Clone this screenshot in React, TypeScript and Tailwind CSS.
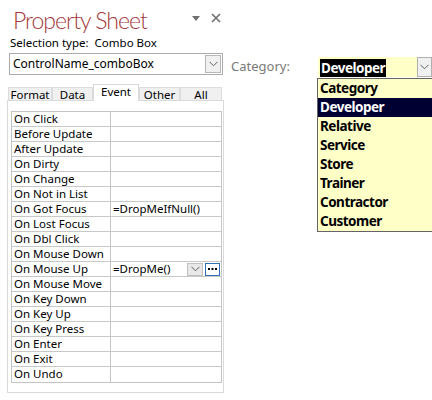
import React from "react";

const rows: [string, string][] = [
  ["On Click", ""],
  ["Before Update", ""],
  ["After Update", ""],
  ["On Dirty", ""],
  ["On Change", ""],
  ["On Not in List", ""],
  ["On Got Focus", "=DropMeIfNull()"],
  ["On Lost Focus", ""],
  ["On Dbl Click", ""],
  ["On Mouse Down", ""],
  ["On Mouse Up", "=DropMe()"],
  ["On Mouse Move", ""],
  ["On Key Down", ""],
  ["On Key Up", ""],
  ["On Key Press", ""],
  ["On Enter", ""],
  ["On Exit", ""],
  ["On Undo", ""],
];

const items = ["Category", "Developer", "Relative", "Service", "Store", "Trainer", "Contractor", "Customer"];

function Chevron({ className = "" }: { className?: string }) {
  return (
    <svg width="9" height="6" viewBox="0 0 9 6" className={className}>
      <path d="M0.5 0.8 L4.5 4.8 L8.5 0.8" fill="none" stroke="#606060" strokeWidth="1" />
    </svg>
  );
}

export default function App() {
  const tabs = [
    { t: "Format", w: "w-[44px]" },
    { t: "Data", w: "w-[41px]" },
    { t: "Event", w: "w-[46px]" },
    { t: "Other", w: "w-[41px]" },
    { t: "All", w: "w-[42px]" },
  ];
  return (
    <div
      className="w-[432px] h-[400px] bg-white relative overflow-hidden flex text-black"
      style={{ fontFamily: '"Noto Sans", "Open Sans", sans-serif' }}
    >
      {/* Left property sheet */}
      <div className="w-[226px] flex flex-col">
        <div className="flex items-start h-[36px]">
          <div
            className="pl-[13px] pt-[6px] text-[23px] leading-[28px] font-light text-[#a4373a] tracking-[-1px]"
            style={{ fontFamily: 'Lato, "Open Sans", sans-serif' }}
          >
            Property Sheet
          </div>
          <div className="flex-1" />
          <div className="flex items-center gap-[11px] pt-[13px] pr-[5px]">
            <svg width="8" height="5" viewBox="0 0 8 5">
              <path d="M0 0 L8 0 L4 5 Z" fill="#707070" />
            </svg>
            <svg width="10" height="10" viewBox="0 0 10 10">
              <path d="M1 1 L9 9 M9 1 L1 9" stroke="#707070" strokeWidth="1.7" />
            </svg>
          </div>
        </div>
        <div className="pl-[10px] text-[11.5px] leading-[14px] h-[17px]">Selection type:&nbsp; Combo Box</div>
        <div className="ml-[9px] w-[214px] h-[22px] border border-[#ababab] flex items-center">
          <div className="flex-1 pl-[3px] text-[12px] leading-[14px]">ControlName_comboBox</div>
          <div className="w-[16px] h-[18px] mr-[1px] bg-[#f0f0f0] border border-[#b8b8b8] flex items-center justify-center">
            <Chevron />
          </div>
        </div>
        {/* tabs */}
        <div className="ml-[8px] mt-[8px] flex items-end h-[17px]">
          {tabs.map((tab) =>
            tab.t === "Event" ? (
              <div
                key={tab.t}
                className={`${tab.w} h-[17px] bg-white border-t border-l border-r border-[#d9d9d9] text-[11.5px] leading-[14px] flex justify-center relative z-10 -mb-px`}
              >
                {tab.t}
              </div>
            ) : (
              <div
                key={tab.t}
                className={`${tab.w} h-[13px] bg-[#f0f0f0] border-l border-r border-t border-[#dcdcdc] text-[11.5px] leading-[16px] flex justify-center -mt-px`}
              >
                <span className="-mt-[1px]">{tab.t}</span>
              </div>
            )
          )}
        </div>
        <div className="ml-[7px] w-[217px] h-[293px] border border-[#dadada] pt-[10px] pl-[3px]">
          <div className="w-[211px] border border-[#c4c4c4]">
            {rows.map(([k, v], i) => (
              <div
                key={k}
                className={`flex h-[15px] ${i < rows.length - 1 ? "border-b border-[#c8c8c8]" : ""}`}
              >
                <div className="w-[99px] border-r border-[#c4c4c4] pl-[2px] text-[11.5px] leading-[14px] whitespace-nowrap overflow-hidden">
                  {k}
                </div>
                <div className="flex-1 flex items-center pl-[2px] text-[11.5px] leading-[14px] whitespace-nowrap">
                  <span className="flex-1">{v}</span>
                  {k === "On Mouse Up" && (
                    <div className="flex items-center gap-[2px] pr-[1px]">
                      <div className="w-[16px] h-[13px] bg-[#e8e8e8] border border-[#c0c0c0] flex items-center justify-center">
                        <Chevron />
                      </div>
                      <div className="w-[15px] h-[13px] bg-white border border-[#2a6fb8] flex items-center justify-center">
                        <svg width="9" height="3" viewBox="0 0 9 3">
                          <rect x="0" y="0" width="2" height="2" fill="#000" />
                          <rect x="3.5" y="0" width="2" height="2" fill="#000" />
                          <rect x="7" y="0" width="2" height="2" fill="#000" />
                        </svg>
                      </div>
                    </div>
                  )}
                </div>
              </div>
            ))}
          </div>
        </div>
      </div>

      {/* Right area */}
      <div className="flex-1 flex items-start pt-[57px] pl-[5px]">
        <div className="w-[87px] h-[20px] flex items-center text-[13px] text-[#7a7a7a]">Category:</div>
        <div className="flex-1 h-[20px] bg-[#ffffc8] flex items-center">
          <div className="flex-1 pl-[2px]">
            <span className="bg-black text-white font-bold text-[13.5px] leading-[18px] px-[1px] tracking-[-0.5px]">Developer</span>
          </div>
          <div className="w-[15px] h-[20px] bg-[#f0f0f0] border border-[#b0b0b0] flex items-center justify-center">
            <Chevron />
          </div>
        </div>
      </div>

      {/* Dropdown list overlay */}
      <div className="absolute left-[317px] top-[78px] w-[130px] border border-[#646464] bg-[#ffffc8]">
        {items.map((it) => (
          <div
            key={it}
            className={`h-[19px] pl-[2px] font-bold text-[13.5px] leading-[19px] tracking-[-0.5px] ${
              it === "Developer" ? "bg-[#000033] text-white" : "text-black"
            }`}
          >
            {it}
          </div>
        ))}
      </div>
    </div>
  );
}
